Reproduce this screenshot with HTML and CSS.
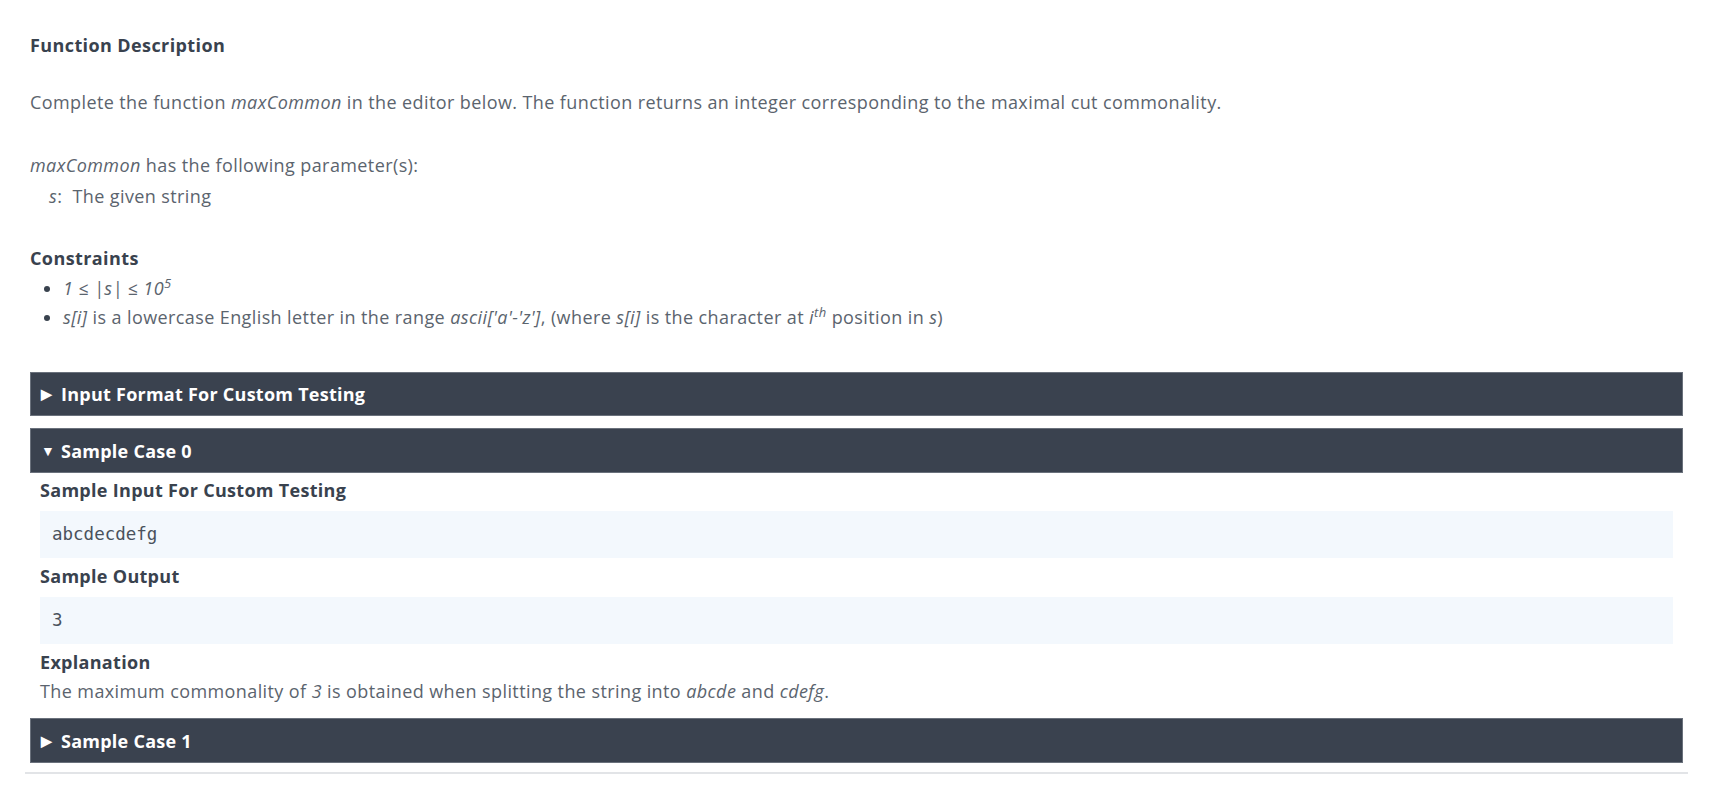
FILE: index.html
```html
<!DOCTYPE html>
<html lang="en">
<head>
<meta charset="utf-8">
<title>maxCommon</title>
<link rel="stylesheet" href="styles.css">
</head>
<body>
<div class="page">
  <div class="content">
    <h3 class="title">Function Description</h3>
    <p class="para">Complete the function <em>maxCommon</em> in the editor below. The function returns an integer corresponding to the maximal cut commonality.</p>
    <p class="para params"><em>maxCommon</em> has the following parameter(s):</p>
    <div class="param"><em>s</em>:&nbsp; The given string</div>

    <h3 class="title constraints">Constraints</h3>
    <ul class="list">
      <li><em>1 ≤ |s| ≤ 10<sup>5</sup></em></li>
      <li><em>s[i]</em> is a lowercase English letter in the range <em>ascii['a'-'z']</em>, (where <em>s[i]</em> is the character at <em>i<sup>th</sup></em> position in <em>s</em>)</li>
    </ul>

    <div class="bar first"><span class="tri">&#9654;</span>Input Format For Custom Testing</div>

    <div class="bar second"><span class="tri down">&#9660;</span>Sample Case 0</div>
    <div class="case">
      <div class="sub">Sample Input For Custom Testing</div>
      <pre class="code">abcdecdefg</pre>
      <div class="sub">Sample Output</div>
      <pre class="code">3</pre>
      <div class="sub expl">Explanation</div>
      <div class="expl-text">The maximum commonality of <em>3</em> is obtained when splitting the string into <em>abcde</em> and <em>cdefg</em>.</div>
    </div>

    <div class="bar third"><span class="tri">&#9654;</span>Sample Case 1</div>
  </div>
  <hr class="rule">
</div>
</body>
</html>
```

FILE: styles.css
```css
html, body {
  margin: 0;
  padding: 0;
  background: #ffffff;
}

body {
  font-family: "Open Sans", Lato, "Liberation Sans", sans-serif;
  color: #5b646e;
  font-size: 18px;
  letter-spacing: 0.4px;
}

.page {
  padding: 0 24px 0 25px;
}

.content {
  padding: 0 5px 0 5px;
}

.title {
  margin: 31px 0 0 0;
  font-size: 18px;
  line-height: 28px;
  font-weight: 700;
  color: #39424e;
  letter-spacing: 0.4px;
}

.constraints {
  margin-top: 34px;
}

.para {
  margin: 29px 0 0 0;
  line-height: 28px;
}

.params {
  margin-top: 35px;
}

.param {
  margin-top: 3px;
  line-height: 28px;
  padding-left: 19px;
}

em {
  font-style: italic;
}

sup {
  font-size: 13px;
  line-height: 0;
  vertical-align: 7px;
}

.list {
  margin: 2px 0 0 0;
  padding-left: 33px;
  line-height: 29px;
}

.list li::marker {
  color: #39424e;
}

.bar {
  background: #3a424f;
  border: 1px solid #6a717c;
  color: #ffffff;
  font-weight: 700;
  font-size: 18px;
  letter-spacing: 0.25px;
  box-sizing: border-box;
  display: flex;
  align-items: center;
  padding-left: 10px;
}

.bar.first {
  margin-top: 40px;
  height: 44px;
}

.bar.second {
  margin-top: 12px;
  height: 45px;
}

.bar.third {
  margin-top: 13px;
  height: 45px;
}

.tri {
  font-size: 14px;
  width: 20px;
  display: inline-block;
  line-height: 1;
  letter-spacing: 0;
}

.case {
  padding: 0 10px;
}

.sub {
  color: #39424e;
  font-weight: 700;
  font-size: 18px;
  letter-spacing: 0.3px;
  line-height: 28px;
  margin-top: 3px;
}

.code + .sub {
  margin-top: 4px;
}

.code {
  margin: 7px 0 0 0;
  background: #f3f8fd;
  font-family: "DejaVu Sans Mono", "Liberation Mono", monospace;
  font-size: 17.5px;
  letter-spacing: 0;
  color: #4a525c;
  height: 47px;
  box-sizing: border-box;
  padding: 0 12px;
  line-height: 47px;
}

.expl-text {
  line-height: 28px;
  margin-top: 1px;
}

.rule {
  margin: 9px 0 0 0;
  border: 0;
  border-top: 2px solid #e2e4e7;
  height: 0;
}
```
